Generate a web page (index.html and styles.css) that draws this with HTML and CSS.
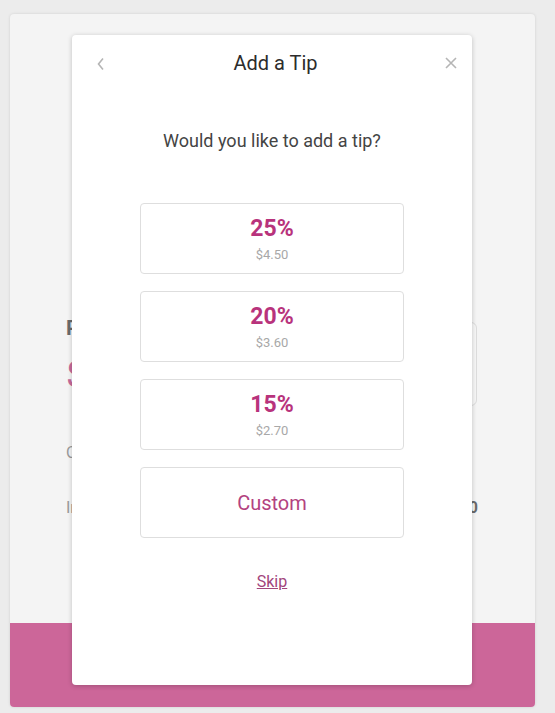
FILE: index.html
```html
<!DOCTYPE html>
<html lang="en">
<head>
<meta charset="utf-8">
<title>Add a Tip</title>
<link rel="stylesheet" href="styles.css">
</head>
<body>
<div class="card">
  <div class="card-body">
    <div class="pay-row">
      <div class="pay-info">
        <div class="pay-label">Pay Amount</div>
        <div class="pay-amount">$18.00</div>
      </div>
      <div class="pay-box"></div>
    </div>
    <div class="line muted">Order #10482 · Table 7</div>
    <div class="line split">
      <span class="muted">Including tip</span>
      <span class="strong">$0.00</span>
    </div>
  </div>
  <div class="card-footer"></div>

  <div class="modal">
    <div class="modal-header">
      <svg class="icon back" width="10" height="14" viewBox="0 0 10 14"><path d="M7 1.5 L2.5 7 L7 12.5" fill="none" stroke="#b5b5b5" stroke-width="1.6"/></svg>
      <div class="modal-title">Add a Tip</div>
      <svg class="icon close" width="12" height="12" viewBox="0 0 12 12"><path d="M1 1 L11 11 M11 1 L1 11" fill="none" stroke="#b5b5b5" stroke-width="1.6"/></svg>
    </div>
    <div class="question">Would you like to add a tip?</div>
    <div class="options">
      <button class="option"><span class="pct">25%</span><span class="amt">$4.50</span></button>
      <button class="option"><span class="pct">20%</span><span class="amt">$3.60</span></button>
      <button class="option"><span class="pct">15%</span><span class="amt">$2.70</span></button>
      <button class="option"><span class="custom">Custom</span></button>
    </div>
    <a class="skip" href="#">Skip</a>
  </div>
</div>
</body>
</html>
```

FILE: styles.css
```css
html, body {
  margin: 0;
  padding: 0;
}
body {
  background: #ececec;
  font-family: Roboto, "Liberation Sans", Arial, sans-serif;
  padding: 14px 20px 6px 10px;
}
.card {
  position: relative;
  width: 525px;
  height: 693px;
  background: #f4f4f4;
  border-radius: 4px;
  box-shadow: 0 0 3px rgba(0,0,0,0.12);
  display: flex;
  flex-direction: column;
}
.card-body {
  flex: 1;
  padding: 303px 58px 0 56px;
}
.pay-row {
  display: flex;
  justify-content: space-between;
  align-items: flex-start;
  height: 90px;
}
.pay-info {
  margin-top: -2px;
}
.pay-label {
  font-size: 21px;
  font-weight: 700;
  color: #6a6a6a;
  line-height: 26px;
}
.pay-amount {
  font-size: 36px;
  color: #c66a9a;
  line-height: 44px;
  margin-top: 12px;
}
.pay-box {
  width: 180px;
  height: 82px;
  border: 1px solid #dcdcdc;
  border-radius: 6px;
  background: #f7f7f7;
  margin-top: 5px;
}
.line {
  font-size: 16px;
  line-height: 24px;
}
.line.muted { margin-top: 34px; }
.muted { color: #9a9a9a; }
.split {
  display: flex;
  justify-content: space-between;
  margin-top: 31px;
  margin-right: -1px;
}
.strong { color: #6a6a6a; font-weight: 700; }
.card-footer {
  height: 84px;
  background: #cc6699;
  border-radius: 0 0 4px 4px;
}

.modal {
  position: absolute;
  left: 62px;
  top: 21px;
  width: 400px;
  height: 650px;
  background: #fff;
  border-radius: 4px;
  box-shadow: 0 1px 5px rgba(0,0,0,0.22);
  display: flex;
  flex-direction: column;
  align-items: center;
}
.modal-header {
  box-sizing: border-box;
  width: 100%;
  padding: 16px 15px 16px 24px;
  display: flex;
  align-items: center;
  justify-content: space-between;
}
.modal-title {
  font-size: 20px;
  font-weight: 400;
  color: #2c2c2c;
  line-height: 24px;
}
.icon { display: block; }
.back { margin-top: 1px; }
.question {
  margin-top: 38px;
  font-size: 18px;
  line-height: 24px;
  color: #444;
}
.options {
  margin-top: 50px;
  display: flex;
  flex-direction: column;
  gap: 17px;
  width: 264px;
}
.option {
  box-sizing: border-box;
  height: 71px;
  border: 1px solid #dedede;
  border-radius: 4px;
  background: #fff;
  display: flex;
  flex-direction: column;
  align-items: center;
  justify-content: center;
  gap: 4px;
  padding: 0;
  font-family: inherit;
  cursor: pointer;
}
.pct {
  font-size: 23px;
  font-weight: 700;
  line-height: 28px;
  color: #b8337c;
}
.amt {
  font-size: 13px;
  line-height: 16px;
  color: #a8a8a8;
}
.custom {
  font-size: 20px;
  line-height: 24px;
  color: #b3427f;
}
.skip {
  margin-top: 34px;
  font-size: 16px;
  line-height: 20px;
  color: #a2457c;
  text-decoration: underline;
}
```
